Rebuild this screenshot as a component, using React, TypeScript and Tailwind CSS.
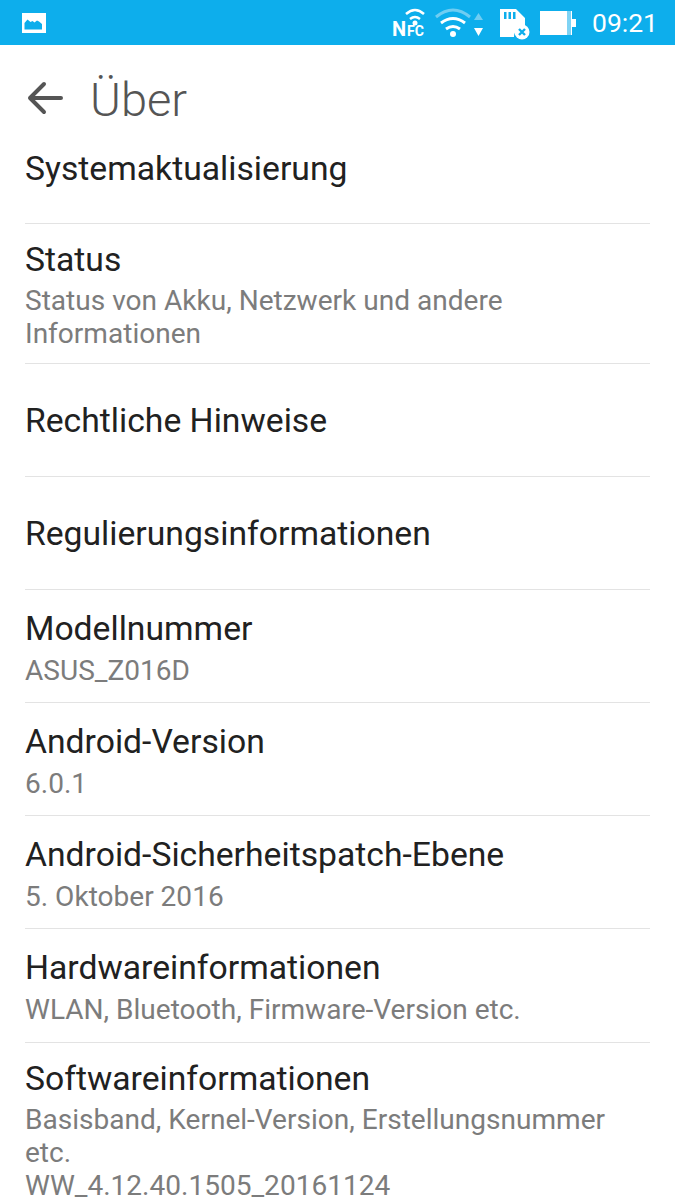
import React from "react";

function Row({ title, lines = [], first = false, tall = false }: { title: string; lines?: string[]; first?: boolean; tall?: boolean }) {
  return (
    <div
      className={
        first
          ? "mx-[25px] flex h-[97px] flex-col justify-start border-b border-[#e3e3e3] pt-[21px]"
          : tall
            ? "mx-[25px] flex min-h-[114px] flex-col justify-center border-b border-[#e3e3e3] pt-[15px] pb-[13px]"
            : "mx-[25px] flex min-h-[113px] flex-col justify-center border-b border-[#e3e3e3] pt-[15px] pb-[13px]"
      }
    >
      <div className="text-[33.7px] leading-[42px] text-[#212121]">{title}</div>
      {lines.length > 0 && (
        <div className={lines.length === 1 ? "mt-[4px] text-[28.05px] leading-[33px] text-[#7c7c7c]" : "mt-[3px] text-[28.05px] leading-[33px] text-[#7c7c7c]"}>
          {lines.map((l) => (
            <div key={l} className="whitespace-nowrap">{l}</div>
          ))}
        </div>
      )}
    </div>
  );
}

function StatusBar() {
  return (
    <div className="flex h-[45px] items-center justify-between bg-[#0daeec] pl-[22px] pr-[17px]">
      <svg width="24" height="20" viewBox="0 0 24 20">
        <path fill="#fff" d="M0 0h24v20H0z" />
        <path fill="#0daeec" d="M2.500 16.500V10l3-3.500 3 2.500 2-1 2 1.500 2.500-2 2 1 3 2.500v5.500z" />
      </svg>
      <div className="flex items-center">
        <svg width="36" height="40" viewBox="0 0 36 40" className="overflow-visible">
          <path fill="none" stroke="#fff" strokeWidth="2.500" d="M15 11q9-8 18 0M19 16q5-4 10 0" />
          <circle cx="24" cy="20" r="2.500" fill="#fff" />
          <text x="1" y="33" fill="#fff" fontSize="20" fontWeight="700" fontFamily="Roboto">N</text>
          <text x="16" y="33" fill="#fff" fontSize="14" fontWeight="700" fontFamily="Roboto">FC</text>
        </svg>
        <svg width="50" height="34" viewBox="0 0 50 34" className="ml-[8px]">
          <path fill="none" stroke="#6fcdf2" strokeWidth="3" d="M1 11q17-14 34 0" />
          <path fill="none" stroke="#fff" strokeWidth="3" d="M6 17q12-9 24 0M11 23q7-5 14 0" />
          <circle cx="18" cy="28" r="3" fill="#fff" />
          <path fill="#6fcdf2" d="M39 14l4.500-7 4.500 7z" />
          <path fill="#fff" d="M39 22l4.500 8 4.500-8z" />
        </svg>
        <svg width="31" height="34" viewBox="0 0 31 34" className="ml-[15px]">
          <path fill="#fff" d="M0 3h16l9 9v11a8 8 0 0 0-11 8H0z" />
          <path fill="#0daeec" d="M4 6h2.500v7H4zM8.500 6H11v7H8.500zM13 6h2.500v7H13z" />
          <circle cx="22" cy="26" r="7.500" fill="#fff" />
          <path stroke="#0daeec" strokeWidth="2.400" d="M19 23l6 6M25 23l-6 6" />
        </svg>
        <svg width="36" height="24" viewBox="0 0 36 24" className="ml-[9px]">
          <path fill="#fff" d="M0 0h27v24H0zM31 0h1v24h-1zM32 8h4v8h-4z" />
          <path fill="#7fd3f4" d="M27 0h4v24h-4z" />
        </svg>
        <span className="ml-[16px] text-[26.500px] leading-[45px] text-white">09:21</span>
      </div>
    </div>
  );
}

export default function App() {
  return (
    <div className="h-[1200px] w-[675px] overflow-hidden bg-white font-['Roboto',sans-serif]">
      <StatusBar />
      <div className="flex h-[82px] items-end pl-[27px]">
        <svg width="37" height="36" viewBox="0 0 37 36" className="mb-[11px]">
          <path fill="none" stroke="#555" strokeWidth="4" strokeLinecap="round" strokeLinejoin="round" d="M34 18H3M17 4L3 18l14 14" />
        </svg>
        <span className="mb-[1px] ml-[26px] text-[47px] font-light leading-[52px] text-[#555]">Über</span>
      </div>
      <Row first title="Systemaktualisierung" />
      <Row title="Status" lines={["Status von Akku, Netzwerk und andere", "Informationen"]} />
      <Row title="Rechtliche Hinweise" />
      <Row title="Regulierungsinformationen" />
      <Row title="Modellnummer" lines={["ASUS_Z016D"]} />
      <Row title="Android-Version" lines={["6.0.1"]} />
      <Row title="Android-Sicherheitspatch-Ebene" lines={["5. Oktober 2016"]} />
      <Row tall title="Hardwareinformationen" lines={["WLAN, Bluetooth, Firmware-Version etc."]} />
      <Row title="Softwareinformationen" lines={["Basisband, Kernel-Version, Erstellungsnummer", "etc.", "WW_4.12.40.1505_20161124"]} />
    </div>
  );
}
